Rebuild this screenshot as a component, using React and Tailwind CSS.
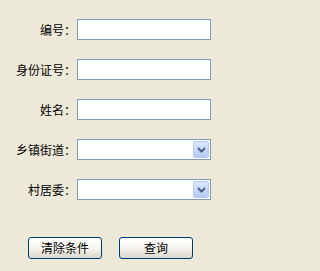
import React from "react";

const font = { fontFamily: '"Noto Sans CJK SC", "Noto Sans", sans-serif' };

function Label({ children }) {
  return (
    <div className="w-[77px] pr-[1px] text-right text-[12px] leading-[21px] text-black whitespace-nowrap">
      {children}
    </div>
  );
}

function TextInput() {
  return <div className="w-[134px] h-[21px] border border-[#7f9db9] bg-white" />;
}

function SelectBox() {
  return (
    <div className="w-[134px] h-[21px] border border-[#7f9db9] bg-white flex justify-end p-[1px]">
      <div className="w-[16px] h-[17px] rounded-[2px] border border-[#b9cbf3] bg-gradient-to-b from-[#dce6fd] to-[#b7c9f5] flex items-center justify-center">
        <svg width="9" height="6" viewBox="0 0 9 6">
          <path d="M1 1 L4.5 4.5 L8 1" fill="none" stroke="#4d6185" strokeWidth="2" />
        </svg>
      </div>
    </div>
  );
}

function Button({ children }) {
  return (
    <div className="w-[74px] h-[22px] rounded-[3px] border border-[#003c74] bg-gradient-to-b from-white via-[#f6f5f1] to-[#dcd8cc] flex items-center justify-center text-[12px] text-black">
      {children}
    </div>
  );
}

export default function App() {
  return (
    <div className="w-full min-w-[223px] h-[271px] bg-[#ece9d8] pt-[19px]" style={font}>
      <div className="flex flex-col gap-[19px]">
        <div className="flex"><Label>编号：</Label><TextInput /></div>
        <div className="flex"><Label>身份证号：</Label><TextInput /></div>
        <div className="flex"><Label>姓名：</Label><TextInput /></div>
        <div className="flex"><Label>乡镇街道：</Label><SelectBox /></div>
        <div className="flex"><Label>村居委：</Label><SelectBox /></div>
      </div>
      <div className="flex pl-[28px] gap-[17px] mt-[37px]">
        <Button>清除条件</Button>
        <Button>查询</Button>
      </div>
    </div>
  );
}
